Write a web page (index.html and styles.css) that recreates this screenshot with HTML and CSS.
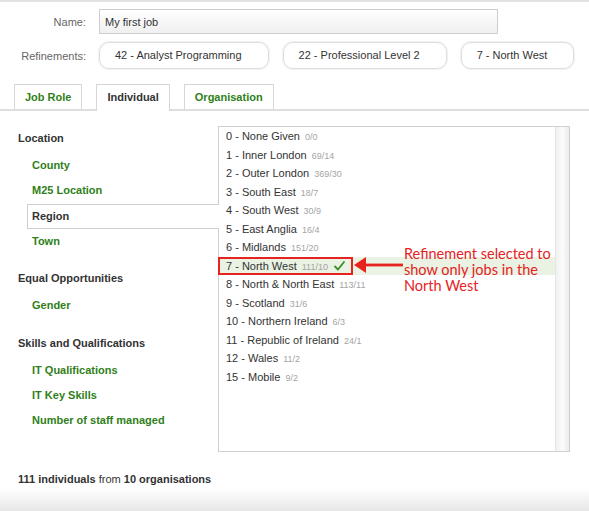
FILE: index.html
```html
<!DOCTYPE html>
<html lang="en">
<head>
    <meta charset="UTF-8">
    <meta name="viewport" content="width=device-width, initial-scale=1.0">
    <title>Job Refinements</title>
    <link rel="stylesheet" href="styles.css">
</head>
<body>
    <div class="job-form">
        <div class="form-row">
            <label for="job-name">Name:</label>
            <input type="text" id="job-name" value="My first job">
        </div>
        <div class="form-row">
            <label>Refinements:</label>
            <div class="pills">
                <span class="pill">42 - Analyst Programming</span>
                <span class="pill">22 - Professional Level 2</span>
                <span class="pill">7 - North West</span>
            </div>
        </div>
    </div>

    <div class="tabs">
        <a class="tab">Job Role</a>
        <a class="tab active">Individual</a>
        <a class="tab">Organisation</a>
    </div>

    <div class="main">
        <div class="facets">
            <h3>Location</h3>
            <ul class="facet-list">
                <li>County</li>
                <li>M25 Location</li>
                <li class="selected">Region</li>
                <li>Town</li>
            </ul>

            <h3>Equal Opportunities</h3>
            <ul class="facet-list">
                <li>Gender</li>
            </ul>

            <h3>Skills and Qualifications</h3>
            <ul class="facet-list">
                <li>IT Qualifications</li>
                <li>IT Key Skills</li>
                <li>Number of staff managed</li>
            </ul>
        </div>

        <div class="values">
            <ul class="value-list">
                <li>0 - None Given<span class="count">0/0</span></li>
                <li>1 - Inner London<span class="count">69/14</span></li>
                <li>2 - Outer London<span class="count">369/30</span></li>
                <li>3 - South East<span class="count">18/7</span></li>
                <li>4 - South West<span class="count">30/9</span></li>
                <li>5 - East Anglia<span class="count">16/4</span></li>
                <li>6 - Midlands<span class="count">151/20</span></li>
                <li class="selected">
                    7 - North West<span class="count">111/10</span>
                    <svg class="check" width="11" height="10" viewBox="0 0 11 10">
                        <path d="M1 5.5 L4 8.5 L10 1" fill="none" stroke="#3a8f22" stroke-width="1.8" stroke-linecap="round" stroke-linejoin="round"/>
                    </svg>
                    <!-- annotation overlay -->
                    <span class="callout-box"></span>
                    <svg class="callout-arrow" width="50" height="18" viewBox="0 0 50 18">
                        <polygon points="1,8 13,0 13,16" fill="#e5231f"/>
                        <rect x="12" y="6.6" width="38" height="2.8" fill="#e5231f"/>
                    </svg>
                    <span class="callout-text">Refinement selected to<br>show only jobs in the<br>North West</span>
                </li>
                <li>8 - North &amp; North East<span class="count">113/11</span></li>
                <li>9 - Scotland<span class="count">31/6</span></li>
                <li>10 - Northern Ireland<span class="count">6/3</span></li>
                <li>11 - Republic of Ireland<span class="count">24/1</span></li>
                <li>12 - Wales<span class="count">11/2</span></li>
                <li>15 - Mobile<span class="count">9/2</span></li>
            </ul>
            <div class="scrollbar"></div>
        </div>
    </div>

    <p class="summary"><b>111 individuals</b> from <b>10 organisations</b></p>
    <div class="footer"></div>
</body>
</html>
```

FILE: styles.css
```css
* {
    box-sizing: border-box;
}

body {
    margin: 0;
    border-top: 2px solid #e2e2e2;
    font-family: 'Liberation Sans', Arial, sans-serif;
    font-size: 11px;
    color: #333;
    background-color: white;
}

.job-form {
    padding-top: 7px;
}

.form-row {
    display: grid;
    grid-template-columns: 86px 1fr;
    column-gap: 13px;
    align-items: center;
    margin-bottom: 8px;
}

.form-row label {
    text-align: right;
    color: #666;
}

#job-name {
    width: 399px;
    height: 25px;
    padding: 0 5px;
    border: 1px solid #cdcdcd;
    background: linear-gradient(#fff, #f0f0f0);
    font-family: inherit;
    font-size: 11px;
    color: #333;
}

.pills {
    display: flex;
    gap: 14px;
}

.pill {
    height: 27px;
    line-height: 25px;
    padding: 0 26px 0 15px;
    border: 1px solid #dedede;
    border-radius: 10px;
    box-shadow: 0 0 0 1px #f2f2f2;
    white-space: nowrap;
}

.tabs {
    display: flex;
    align-items: flex-end;
    gap: 14px;
    margin-top: 15px;
    padding-left: 14px;
    height: 27px;
    border-bottom: 2px solid #dedede;
}

.tab {
    height: 25px;
    line-height: 25px;
    padding: 0 10px;
    border: 1px solid #d6d6d6;
    border-bottom: none;
    background-color: white;
    color: #2f7f1a;
    font-weight: bold;
}

.tab.active {
    height: 27px;
    margin-bottom: -2px;
    color: #333;
    padding-bottom: 2px;
}

.main {
    display: flex;
    align-items: flex-start;
    margin-top: 15px;
}

.facets {
    width: 218px;
    flex-shrink: 0;
    padding: 3px 0 0 18px;
}

.facets h3 {
    margin: 0 0 6px;
    font-size: 11px;
    line-height: 18px;
    color: #333;
}

.facet-list {
    list-style: none;
    margin: 0 0 15.3px 9px;
    padding: 0;
}

.facet-list li {
    height: 25.3px;
    line-height: 25.3px;
    padding-left: 5px;
    font-weight: bold;
    color: #2f7f1a;
}

.facet-list li.selected {
    position: relative;
    z-index: 1;
    height: 25px;
    line-height: 23px;
    margin-right: -1px;
    padding-left: 4px;
    border: 1px solid #cfcfcf;
    border-right: none;
    background-color: white;
    color: #333;
}

.values {
    display: flex;
    width: 352px;
    height: 326px;
    border: 1px solid #cfcfcf;
}

.value-list {
    flex: 1;
    list-style: none;
    margin: 0;
    padding: 0;
}

.value-list li {
    height: 18.5px;
    line-height: 18.5px;
    padding-left: 7px;
    white-space: nowrap;
}

.value-list li.selected {
    position: relative;
    background-color: #e9f2e3;
}

.count {
    margin-left: 5px;
    font-size: 9px;
    color: #a5a5a5;
}

.check {
    margin-left: 3px;
    vertical-align: -1px;
}

.callout-box {
    position: absolute;
    left: -1px;
    top: 0;
    width: 135px;
    height: 18px;
    border: 2px solid #e5231f;
}

.callout-arrow {
    position: absolute;
    left: 134px;
    top: 0;
}

.callout-text {
    position: absolute;
    left: 185px;
    top: -11px;
    font-family: Lato, 'Open Sans', sans-serif;
    font-size: 14.5px;
    line-height: 16px;
    color: #e5231f;
}

.scrollbar {
    width: 14px;
    height: 100%;
    border-left: 1px solid #e6e6e6;
    background: linear-gradient(90deg, #f1f1f1, #fbfbfb 50%, #ececec);
}

.summary {
    margin: 19px 0 0 18px;
    line-height: 17px;
}

.footer {
    height: 24px;
    background: linear-gradient(#fff, #e6e6e6);
}
```
